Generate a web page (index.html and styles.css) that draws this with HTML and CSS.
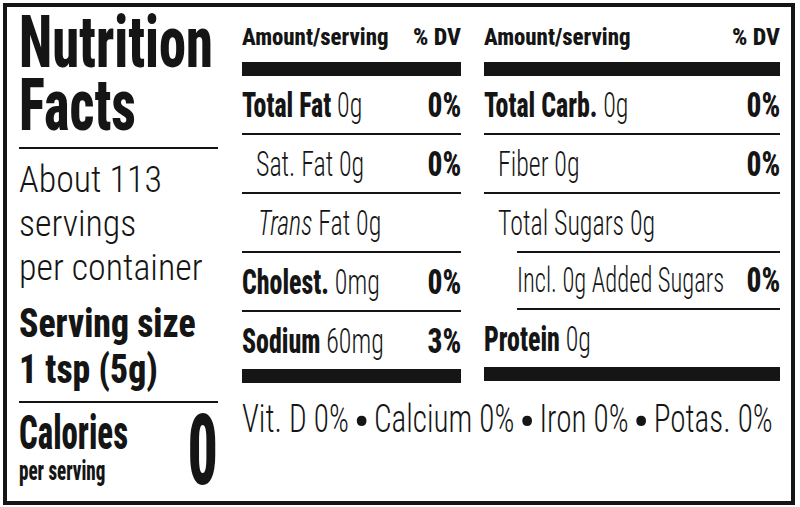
FILE: index.html
```html
<!DOCTYPE html>
<html lang="en">
<head>
<meta charset="utf-8">
<title>Nutrition Facts</title>
<link rel="stylesheet" href="styles.css">
</head>
<body>
<div class="label">
  <section class="intro">
    <h1 class="title"><span class="sq">Nutrition<br>Facts</span></h1>
    <div class="servings"><span class="sq">About 113<br>servings<br>per container</span></div>
    <div class="size"><span class="sq">Serving size<br>1 tsp (5g)</span></div>
    <div class="calories">
      <div class="cal-text">
        <div class="cal-label"><span class="sq">Calories</span></div>
        <div class="cal-sub"><span class="sq">per serving</span></div>
      </div>
      <div class="cal-num"><span class="sq">0</span></div>
    </div>
  </section>
  <section class="facts">
    <div class="cols">
      <div class="col col-a">
        <div class="head"><span class="h-l">Amount/serving</span><span class="h-r">% DV</span></div>
        <div class="bar"></div>
        <div class="row"><span class="txt"><b>Total Fat</b> 0g</span><b class="dv">0%</b></div>
        <div class="row sub"><span class="txt">Sat. Fat 0g</span><b class="dv">0%</b></div>
        <div class="row sub trans"><span class="txt"><i>Trans</i> Fat 0g</span></div>
        <div class="row"><span class="txt"><b>Cholest.</b> 0mg</span><b class="dv">0%</b></div>
        <div class="row last"><span class="txt"><b>Sodium</b> 60mg</span><b class="dv">3%</b></div>
        <div class="bar"></div>
      </div>
      <div class="col col-b">
        <div class="head"><span class="h-l">Amount/serving</span><span class="h-r">% DV</span></div>
        <div class="bar"></div>
        <div class="row"><span class="txt"><b>Total Carb.</b> 0g</span><b class="dv">0%</b></div>
        <div class="row sub"><span class="txt">Fiber 0g</span><b class="dv">0%</b></div>
        <div class="row sub open"><span class="txt">Total Sugars 0g</span></div>
        <div class="row subsub"><span class="txt">Incl. 0g Added Sugars</span><b class="dv">0%</b></div>
        <div class="row last"><span class="txt"><b>Protein</b> 0g</span></div>
        <div class="bar"></div>
      </div>
    </div>
    <p class="vitamins"><span class="sq">Vit. D 0% <span class="dot">•</span> Calcium 0% <span class="dot">•</span> Iron 0% <span class="dot">•</span> Potas. 0%</span></p>
  </section>
</div>
</body>
</html>
```
FILE: styles.css
```css
* { box-sizing: border-box; }
html, body { margin: 0; padding: 0; background: #fff; overflow: hidden; }
body {
  font-family: "Roboto Condensed", "Liberation Sans", sans-serif;
  color: #151515;
}
.label {
  margin: 3px;
  width: 792px;
  height: 502px;
  border: 4px solid #151515;
  display: flex;
  gap: 24px;
  padding: 0 11px 0 12px;
}

/* horizontally condensed text */
.sq {
  display: inline-block;
  white-space: nowrap;
  transform-origin: left center;
}

/* left column */
.intro {
  width: 199px;
  flex: none;
  display: flex;
  flex-direction: column;
  padding-top: 4px;
}
.title {
  margin: 0;
  font-size: 73px;
  line-height: 63px;
  font-weight: 800;
}
.title .sq { transform: scaleX(0.745); }
.servings {
  margin-top: 10px;
  border-top: 2px solid #151515;
  padding-top: 9px;
  font-size: 37px;
  line-height: 44px;
  font-weight: 300;
}
.servings .sq { transform: scaleX(0.97); }
.size {
  margin-top: 10px;
  font-size: 41px;
  line-height: 46px;
  font-weight: 800;
}
.size .sq { transform: scaleX(0.87); }
.calories {
  margin-top: 9px;
  border-top: 2px solid #151515;
  padding-top: 8px;
  display: flex;
}
.cal-text { flex: 1 1 0; min-width: 0; }
.cal-label {
  font-size: 49px;
  line-height: 44px;
  font-weight: 800;
}
.cal-label .sq { transform: scaleX(0.67); }
.cal-sub {
  font-size: 28px;
  line-height: 32px;
  font-weight: 800;
}
.cal-sub .sq { transform: scaleX(0.68); }
.cal-num {
  flex: none;
  font-size: 98px;
  line-height: 80px;
  font-weight: 800;
}
.cal-num .sq { transform: scaleX(0.61); transform-origin: right center; }

/* right area */
.facts {
  flex: 1;
  min-width: 0;
  padding-top: 15px;
  overflow: hidden;
}
.cols {
  display: flex;
  gap: 23px;
}
.col-a { width: 219px; flex: none; }
.col-b { width: 296px; flex: none; }
.head {
  display: flex;
  justify-content: space-between;
  font-size: 24px;
  line-height: 30px;
  font-weight: 800;
  white-space: nowrap;
}
.h-l { display: inline-block; transform: scaleX(0.95); transform-origin: left center; }
.h-r { display: inline-block; transform-origin: right center; }
.bar {
  height: 14px;
  background: #151515;
  margin-top: 10px;
}
.row + .bar { margin-top: 0; }
.row {
  height: 59px;
  padding-top: 2px;
  line-height: 55px;
  border-bottom: 2px solid #151515;
  display: flex;
  font-size: 35px;
  font-weight: 300;
}
.row .txt {
  flex: 1 1 0;
  min-width: 0;
  white-space: nowrap;
  transform: scaleX(0.74);
  transform-origin: left center;
}
.row b { font-weight: 800; }
.row i { font-style: italic; }
.row .dv {
  flex: none;
  transform: scaleX(0.84);
  transform-origin: right center;
}
.row.last { border-bottom: none; height: 57px; }
.sub { padding-left: 14px; }
.trans { padding-left: 16px; }
.open { border-bottom: none; height: 57px; }
.subsub {
  margin-left: 33px;
  border-top: 2px solid #151515;
  padding-top: 0;
}
.subsub .txt { transform: scaleX(0.7); }
.vitamins {
  margin: 13px 0 0;
  font-size: 38px;
  line-height: 46px;
  font-weight: 300;
}
.vitamins .sq { transform: scaleX(0.82); }
.dot {
  display: inline-block;
  font-size: 54px;
  line-height: 0;
  margin: 0 -2px;
  vertical-align: -8px;
  transform: scaleX(1.2);
}
```
